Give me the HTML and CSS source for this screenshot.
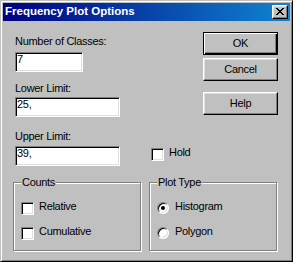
FILE: index.html
```html
<!DOCTYPE html>
<html>
<head>
<meta charset="utf-8">
<title>Frequency Plot Options</title>
<link rel="stylesheet" href="styles.css">
</head>
<body>
<div class="window">
  <div class="titlebar">
    <span class="title">Frequency Plot Options</span>
    <span class="close"><svg width="8" height="7" viewBox="0 0 8 7" shape-rendering="crispEdges"><path d="M0 0h2v1H0zM6 0h2v1H6zM1 1h2v1H1zM5 1h2v1H5zM2 2h4v1H2zM3 3h2v1H3zM2 4h4v1H2zM1 5h2v1H1zM5 5h2v1H5zM0 6h2v1H0zM6 6h2v1H6z" fill="#000"/></svg></span>
  </div>
  <div class="body">
    <div class="top">
      <div class="fields">
        <div class="label">Number of Classes:</div>
        <div class="edit edit-short edit-1">7</div>
        <div class="label label-2">Lower Limit:</div>
        <div class="edit edit-long edit-2">25,</div>
        <div class="label label-3">Upper Limit:</div>
        <div class="row">
          <div class="edit edit-long edit-3">39,</div>
          <div class="choice hold"><span class="check"></span><span class="choice-text">Hold</span></div>
        </div>
      </div>
      <div class="buttons">
        <div class="btn btn-default">OK</div>
        <div class="btn btn-cancel">Cancel</div>
        <div class="btn btn-help">Help</div>
      </div>
    </div>
    <div class="groups">
      <div class="group">
        <span class="legend">Counts</span>
        <div class="choice"><span class="check"></span><span class="choice-text">Relative</span></div>
        <div class="choice"><span class="check"></span><span class="choice-text">Cumulative</span></div>
      </div>
      <div class="group">
        <span class="legend">Plot Type</span>
        <div class="choice"><span class="radio radio-on"></span><span class="choice-text">Histogram</span></div>
        <div class="choice"><span class="radio"></span><span class="choice-text">Polygon</span></div>
      </div>
    </div>
  </div>
</div>
</body>
</html>
```

FILE: styles.css
```css
* { box-sizing: border-box; }
html, body { margin: 0; padding: 0; background: #c0c0c0; }
body {
  font-family: "Liberation Sans", Arial, sans-serif;
  font-size: 11px;
  letter-spacing: -0.3px;
  color: #000;
}
.window {
  width: 293px;
  height: 262px;
  border: 1px solid;
  border-color: #c0c0c0 #000 #000 #c0c0c0;
  box-shadow: inset 1px 1px #fff, inset -1px -1px #808080;
  padding: 2px;
  background: #c0c0c0;
  display: flex;
  flex-direction: column;
}
.titlebar {
  height: 18px;
  flex: none;
  display: flex;
  align-items: flex-start;
  justify-content: space-between;
  padding: 0 2px 0 2px;
  background: linear-gradient(to right, #000080, #1084d0);
}
.title {
  margin-top: 2px;
  color: #fff;
  font-weight: bold;
  font-size: 11.5px;
  line-height: 13px;
  letter-spacing: 0;
  white-space: nowrap;
}
.close {
  margin-top: 2px;
  width: 16px;
  height: 14px;
  display: flex;
  align-items: flex-start;
  padding: 2px 0 0 3px;
  background: #c0c0c0;
  border: 1px solid;
  border-color: #fff #000 #000 #fff;
  box-shadow: inset -1px -1px #808080, inset 1px 1px #dfdfdf;
}
.close svg { display: block; }
.body { flex: 1; }
.top { display: flex; align-items: flex-start; }
.fields { margin-left: 12px; margin-top: 14px; }
.label { line-height: 13px; white-space: nowrap; }
.label-2 { margin-top: 10px; }
.label-3 { margin-top: 13px; }
.edit {
  height: 20px;
  background: #fff;
  border: 1px solid;
  border-color: #808080 #fff #fff #808080;
  box-shadow: inset 1px 1px #000, inset -1px -1px #dfdfdf;
  padding: 0 0 0 1px;
  line-height: 12px;
}
.edit-short { width: 68px; }
.edit-long { width: 105px; }
.edit-1 { margin-top: 4px; }
.edit-2 { margin-top: 2px; }
.edit-3 { margin-top: 3px; }
.row { display: flex; align-items: flex-start; }
.choice { display: flex; align-items: flex-start; gap: 5px; height: 13px; }
.choice-text { line-height: 13px; margin-top: -2px; white-space: nowrap; }
.hold { margin-left: 31px; margin-top: 5px; }
.check {
  width: 13px;
  height: 13px;
  flex: none;
  background: #fff;
  border: 1px solid;
  border-color: #808080 #fff #fff #808080;
  box-shadow: inset 1px 1px #000, inset -1px -1px #dfdfdf;
}
.radio {
  width: 12px;
  height: 12px;
  flex: none;
  border-radius: 50%;
  background: #fff;
  border: 1px solid;
  border-color: #808080 #fff #fff #808080;
  box-shadow: inset 1px 1px #000, inset -1px -1px #dfdfdf;
  display: flex;
  align-items: center;
  justify-content: center;
}
.radio + .choice-text { margin-left: 1px; }
.radio-on::after {
  content: "";
  width: 4px;
  height: 4px;
  border-radius: 50%;
  background: #000;
}
.buttons {
  margin-left: auto;
  margin-right: 12px;
  margin-top: 11px;
  display: flex;
  flex-direction: column;
}
.btn {
  width: 75px;
  height: 23px;
  display: flex;
  align-items: center;
  justify-content: center;
  line-height: 13px;
  background: #c0c0c0;
  border: 1px solid;
  border-color: #fff #000 #000 #fff;
  box-shadow: inset -1px -1px #808080, inset 1px 1px #dfdfdf;
}
.btn-default {
  border-color: #000;
  box-shadow: inset 1px 1px #fff, inset -1px -1px #000, inset -2px -2px #808080;
}
.btn-cancel { margin-top: 3px; }
.btn-help { margin-top: 11px; }
.groups {
  display: flex;
  gap: 8px;
  margin-left: 10px;
  margin-top: 16px;
}
.group {
  position: relative;
  width: 128px;
  height: 69px;
  border: 1px solid #808080;
  box-shadow: inset 1px 1px #fff, 1px 1px #fff;
  padding: 19px 0 0 7px;
  display: flex;
  flex-direction: column;
  gap: 12px;
}
.legend {
  position: absolute;
  left: 7px;
  top: -7px;
  padding: 0 1px;
  line-height: 13px;
  background: #c0c0c0;
  white-space: nowrap;
}
```
